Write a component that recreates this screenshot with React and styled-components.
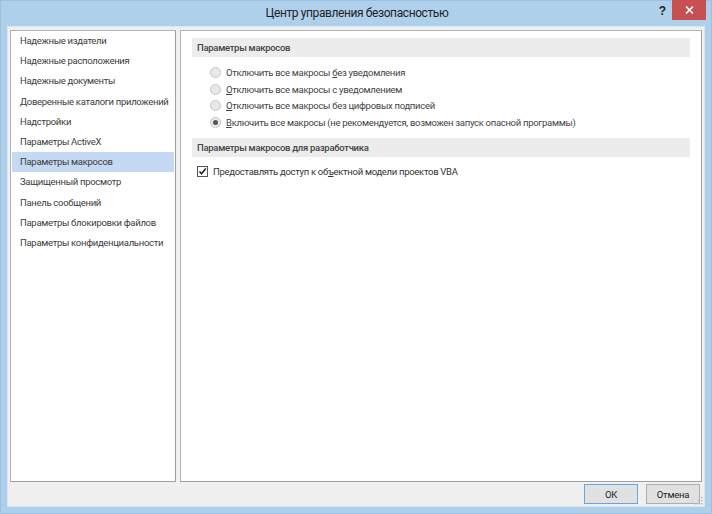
import React, { useState } from 'react';
import styled, { createGlobalStyle } from 'styled-components';

const GlobalStyle = createGlobalStyle`
  html, body {
    margin: 0;
    padding: 0;
    background: #afd0eb;
  }
  body {
    font-family: Roboto, 'Noto Sans', sans-serif;
  }
`;

const Window = styled.div`
  width: 712px;
  height: 514px;
  background: #afd0eb;
  display: flex;
  flex-direction: column;
  box-sizing: border-box;
  border: 1px solid #9cc0e0;
`;

const TitleBar = styled.div`
  height: 25px;
  flex: none;
  display: flex;
  align-items: flex-start;
  position: relative;
`;

const Title = styled.div`
  flex: 1;
  text-align: center;
  font-size: 12px;
  letter-spacing: -0.4px;
  color: #222;
  line-height: 24px;
  padding-left: 2px;
`;

const HelpMark = styled.div`
  position: absolute;
  right: 45px;
  top: 3px;
  font-size: 12px;
  font-weight: 700;
  color: #222;
  font-family: 'Liberation Sans', sans-serif;
`;

const CloseButton = styled.div`
  position: absolute;
  right: 5px;
  top: -1px;
  width: 34px;
  height: 20px;
  background: #c75050;
  display: flex;
  align-items: center;
  justify-content: center;
`;

const Body = styled.div`
  flex: 1;
  margin: 0 6px 6px 6px;
  background: #f0f0f0;
  border: 1px solid #d9e6f2;
  padding: 3px 2px 0 2px;
  display: flex;
  flex-direction: column;
  position: relative;
`;

const Panels = styled.div`
  display: flex;
  gap: 4px;
  height: 452px;
`;

const Panel = styled.div`
  background: #fff;
  border: 1px solid #b4b4b4;
  border-right-color: #a0a0a0;
  border-bottom-color: #a0a0a0;
  width: ${p => p.$w}px;
  box-sizing: border-box;
  flex: none;
`;

const NavList = styled.div`
  display: flex;
  flex-direction: column;
`;

const NavItem = styled.div`
  height: 20.2px;
  line-height: 19px;
  margin: 0 1px;
  padding-left: 8px;
  font-size: 9.5px;
  letter-spacing: -0.3px;
  color: #3c3c3c;
  background: ${p => (p.$active ? '#c5d9f3' : 'transparent')};
  white-space: nowrap;
  cursor: default;
`;

const Content = styled.div`
  padding: 7px 11px 0 11px;
`;

const SectionHeader = styled.div`
  height: 19px;
  line-height: 19px;
  background: #ececec;
  padding-left: 5px;
  font-size: 9.5px;
  letter-spacing: -0.3px;
  font-weight: 500;
  color: #444;
`;

const RadioGroup = styled.div`
  display: flex;
  flex-direction: column;
  padding: 7px 0 7px 18px;
`;

const OptionRow = styled.div`
  display: flex;
  align-items: center;
  gap: 5px;
  height: 16.7px;
  font-size: 9.5px;
  letter-spacing: -0.3px;
  color: #444;
  white-space: nowrap;
`;

const RadioDot = styled.span`
  width: 11px;
  height: 11px;
  border-radius: 50%;
  box-sizing: border-box;
  border: 1px solid #c6c6c6;
  background: #e8e8e8;
  display: flex;
  align-items: center;
  justify-content: center;
  &::after {
    content: '';
    width: 5px;
    height: 5px;
    border-radius: 50%;
    background: ${p => (p.$on ? '#555' : 'transparent')};
  }
`;

const CheckRow = styled(OptionRow)`
  padding: 9px 0 0 5px;
  height: auto;
  color: #333;
`;

const CheckBox = styled.span`
  width: 11px;
  height: 11px;
  box-sizing: border-box;
  border: 1px solid #555;
  background: #fff;
  display: flex;
  align-items: center;
  justify-content: center;
`;

const Footer = styled.div`
  display: flex;
  justify-content: flex-end;
  gap: 8px;
  padding: 2px 2px 0 0;
`;

const Button = styled.button`
  width: 54px;
  height: 20px;
  box-sizing: border-box;
  border: 1px solid ${p => (p.$default ? '#6aa6de' : '#adadad')};
  background: #e1e1e1;
  font-family: Roboto, 'Noto Sans', sans-serif;
  font-size: 9.5px;
  letter-spacing: -0.2px;
  color: #222;
  padding: 0;
  cursor: default;
`;

const Grip = styled.svg`
  position: absolute;
  right: 1px;
  bottom: 1px;
`;

const U = styled.span`
  text-decoration: underline;
`;

const navItems = [
  'Надежные издатели',
  'Надежные расположения',
  'Надежные документы',
  'Доверенные каталоги приложений',
  'Надстройки',
  'Параметры ActiveX',
  'Параметры макросов',
  'Защищенный просмотр',
  'Панель сообщений',
  'Параметры блокировки файлов',
  'Параметры конфиденциальности',
];

const radios = [
  ['Отключить все макросы ', 'б', 'ез уведомления'],
  ['', 'О', 'тключить все макросы с уведомлением'],
  ['', 'О', 'тключить все макросы без цифровых подписей'],
  ['', 'В', 'ключить все макросы (не рекомендуется, возможен запуск опасной программы)'],
];

const App = () => {
  const [active, setActive] = useState(6);
  const [choice, setChoice] = useState(3);

  return (
    <>
      <GlobalStyle />
      <Window>
        <TitleBar>
          <Title>Центр управления безопасностью</Title>
          <HelpMark>?</HelpMark>
          <CloseButton>
            <svg width="9" height="8" viewBox="0 0 9 8">
              <path d="M1 0.5 L8 7.5 M8 0.5 L1 7.5" stroke="#fff" strokeWidth="1.6" />
            </svg>
          </CloseButton>
        </TitleBar>
        <Body>
          <Panels>
            <Panel $w={166}>
              <NavList>
                {navItems.map((item, i) => (
                  <NavItem key={item} $active={i === active} onClick={() => setActive(i)}>
                    {item}
                  </NavItem>
                ))}
              </NavList>
            </Panel>
            <Panel $w={522}>
              <Content>
                <SectionHeader>Параметры макросов</SectionHeader>
                <RadioGroup>
                  {radios.map(([pre, u, post], i) => (
                    <OptionRow key={i} onClick={() => setChoice(i)}>
                      <RadioDot $on={i === choice} />
                      <span>
                        {pre}
                        <U>{u}</U>
                        {post}
                      </span>
                    </OptionRow>
                  ))}
                </RadioGroup>
                <SectionHeader>Параметры макросов для разработчика</SectionHeader>
                <CheckRow>
                  <CheckBox>
                    <svg width="9" height="9" viewBox="0 0 9 9">
                      <path d="M1.5 4.5 L3.5 6.8 L7.8 1.5" stroke="#222" strokeWidth="1.6" fill="none" />
                    </svg>
                  </CheckBox>
                  <span>
                    Предоставлять доступ к об<U>ъ</U>ектной модели проектов VBA
                  </span>
                </CheckRow>
              </Content>
            </Panel>
          </Panels>
          <Footer>
            <Button $default>ОК</Button>
            <Button>Отмена</Button>
          </Footer>
          <Grip width="8" height="8" viewBox="0 0 8 8">
            <g fill="#b8b8b8">
              <rect x="6" y="0" width="1.5" height="1.5" />
              <rect x="3" y="3" width="1.5" height="1.5" />
              <rect x="6" y="3" width="1.5" height="1.5" />
              <rect x="0" y="6" width="1.5" height="1.5" />
              <rect x="3" y="6" width="1.5" height="1.5" />
              <rect x="6" y="6" width="1.5" height="1.5" />
            </g>
          </Grip>
        </Body>
      </Window>
    </>
  );
};

export default App;
